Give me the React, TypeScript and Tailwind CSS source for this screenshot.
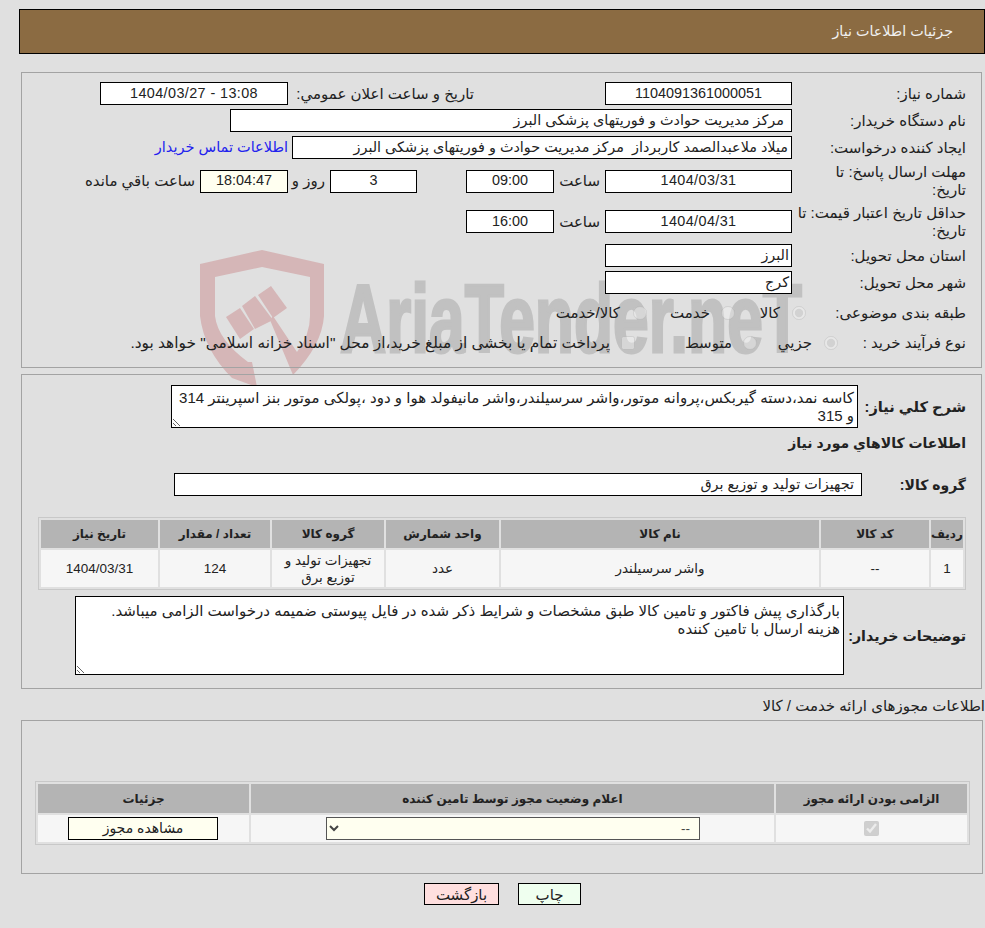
import type { ReactNode } from "react";

function Box({
  className,
  children,
}: {
  className: string;
  children?: ReactNode;
}) {
  return (
    <div
      className={`flex h-[23px] shrink-0 items-center border border-black bg-white text-[14.4px] ${className}`}
    >
      {children}
    </div>
  );
}

function Row({
  className,
  children,
}: {
  className: string;
  children: ReactNode;
}) {
  return <div className={`flex items-center ${className}`}>{children}</div>;
}

function Label({
  className,
  children,
}: {
  className: string;
  children: ReactNode;
}) {
  return <div className={`shrink-0 leading-[18px] ${className}`}>{children}</div>;
}

function Watermark() {
  return (
    <div dir="ltr" className="absolute top-0 left-0 z-0">
      <svg width="985" height="420" viewBox="0 0 985 420">
        <path
          d="M200 264 L262 250 L324 264 L324 316 Q322 345 293 375 L270 320 L273 316 L297 352 Q310 335 310 316 L310 277 L262 267 L215 277 L215 316 Q218 340 248 362 L252 362 L257 387 L232 378 Q204 350 200 316 Z"
          fill="#d5b6b7"
        />
        <path d="M226 317 L240 308 L254 329 L240 339 Z" fill="#d5b6b7" />
        <path d="M242 306 L255 296 L273 320 L255 329 Z" fill="#d5b6b7" />
        <path d="M258 295 L271 286 L287 308 L273 318 Z" fill="#d5b6b7" />
        <text
          x="340"
          y="352"
          fontFamily="Liberation Sans, sans-serif"
          fontWeight="700"
          fontSize="96"
          textLength="462"
          lengthAdjust="spacingAndGlyphs"
          fill="#c1c1c1"
          stroke="#c1c1c1"
          strokeWidth="3"
        >
          AriaTender.neT
        </text>
      </svg>
    </div>
  );
}

function ItemsTable() {
  return (
    <table className="w-[928px] table-fixed border-separate border-spacing-[2px] border border-[#c8c8c8] text-center text-[13.5px]">
      <colgroup>
        <col className="w-[32px]" />
        <col className="w-[108px]" />
        <col className="w-[318px]" />
        <col className="w-[113px]" />
        <col className="w-[112px]" />
        <col className="w-[110px]" />
        <col />
      </colgroup>
      <thead>
        <tr className="h-[28px] bg-[#b4b4b4] text-[12px] font-bold">
          <th>رديف</th>
          <th>کد کالا</th>
          <th>نام کالا</th>
          <th>واحد شمارش</th>
          <th>گروه کالا</th>
          <th>تعداد / مقدار</th>
          <th>تاريخ نياز</th>
        </tr>
      </thead>
      <tbody>
        <tr className="h-[37px] bg-[#f6f6f6] leading-[17px]">
          <td>1</td>
          <td>--</td>
          <td>واشر سرسيلندر</td>
          <td>عدد</td>
          <td>تجهيزات توليد و توزيع برق</td>
          <td>124</td>
          <td>1404/03/31</td>
        </tr>
      </tbody>
    </table>
  );
}

function LicenseTable() {
  return (
    <table className="w-[935px] table-fixed border-separate border-spacing-[2px] border border-[#c8c8c8] text-center text-[13.5px]">
      <colgroup>
        <col className="w-[191px]" />
        <col className="w-[523px]" />
        <col />
      </colgroup>
      <thead>
        <tr className="h-[29px] bg-[#b4b4b4] text-[12px] font-bold">
          <th>الزامی بودن ارائه مجوز</th>
          <th>اعلام وضعيت مجوز توسط تامين کننده</th>
          <th>جزئيات</th>
        </tr>
      </thead>
      <tbody>
        <tr className="h-[27px] bg-[#f6f6f6]">
          <td>
            <input
              type="checkbox"
              checked
              disabled
              readOnly
              className="mx-auto block size-[15px]"
            />
          </td>
          <td>
            <select
              disabled
              className="mr-[74px] block h-[23px] w-[374px] border border-[#555] bg-[#fffff0] pr-[5px] text-[#444] opacity-100"
            >
              <option>--</option>
            </select>
          </td>
          <td>
            <button
              type="button"
              className="mr-[31px] block h-[23px] w-[150px] border border-black bg-[#fffff0] text-[14px] text-[#222]"
            >
              مشاهده مجوز
            </button>
          </td>
        </tr>
      </tbody>
    </table>
  );
}

export default function App() {
  return (
    <div
      dir="rtl"
      className="relative h-[928px] w-[985px] overflow-hidden bg-[#e0e0e0] font-['Liberation_Sans','DejaVu_Sans',sans-serif] text-[15px] text-[#222]"
    >
      <Watermark />
      <div className="relative z-10 pt-[9px]">
        <div className="flex h-[45px] w-[966px] items-center border border-black bg-[#8b6b42] pr-[31px] text-[14.3px] text-[#f0f0f0]">
          جزئيات اطلاعات نياز
        </div>

        <div className="mt-[18px] mr-[3px] h-[296px] w-[961px] border border-[#a3a3a3] pt-[9px] pr-[15px]">
          <Row className="h-[23px]">
            <Label className="w-[174px]">شماره نياز:</Label>
            <Box className="w-[187px] justify-center">1104091361000051</Box>
            <Label className="mr-[131px] w-[181px] whitespace-nowrap">
              تاريخ و ساعت اعلان عمومي:
            </Label>
            <Box className="mr-[5px] w-[188px] justify-center tracking-[0.4px]">
              <span dir="ltr">1404/03/27 - 13:08</span>
            </Box>
          </Row>
          <Row className="mt-[4px] h-[23px]">
            <Label className="w-[174px]">نام دستگاه خريدار:</Label>
            <Box className="w-[562px] pr-[7px]">
              مرکز مديريت حوادث و فوريتهای پزشکی البرز
            </Box>
          </Row>
          <Row className="mt-[4px] h-[23px]">
            <Label className="w-[174px]">ايجاد کننده درخواست:</Label>
            <Box className="w-[500px] pr-[3px]">
              ميلاد ملاعبدالصمد کاربرداز &nbsp;مرکز مديريت حوادث و فوريتهای پزشکی
              البرز
            </Box>
            <a className="mr-[4px] text-[14.5px] text-[#2222ee]" href="#contact">
              اطلاعات تماس خريدار
            </a>
          </Row>
          <Row className="h-[37px] pt-[7px]">
            <Label className="w-[174px] whitespace-nowrap">
              مهلت ارسال پاسخ: تا
              <br />
              تاريخ:
            </Label>
            <Box className="w-[187px] justify-center tracking-[0.4px]">1404/03/31</Box>
            <Label className="w-[51px] pr-[5px]">ساعت</Label>
            <Box className="w-[88px] justify-center">09:00</Box>
            <Box className="mr-[49px] w-[87px] justify-center">3</Box>
            <Label className="w-[42px] pr-[5px]">روز و</Label>
            <Box className="w-[88px] justify-center !bg-[#fffff0]">18:04:47</Box>
            <Label className="pr-[5px]">ساعت باقي مانده</Label>
          </Row>
          <Row className="h-[47px] pt-[4px]">
            <Label className="w-[174px] whitespace-nowrap">
              حداقل تاريخ اعتبار قيمت: تا
              <br />
              تاريخ:
            </Label>
            <Box className="w-[187px] justify-center tracking-[0.4px]">1404/04/31</Box>
            <Label className="w-[51px] pr-[5px]">ساعت</Label>
            <Box className="w-[88px] justify-center">16:00</Box>
          </Row>
          <Row className="mt-[1px] h-[23px]">
            <Label className="w-[174px]">استان محل تحويل:</Label>
            <Box className="w-[187px] pr-[2px]">البرز</Box>
          </Row>
          <Row className="mt-[4px] h-[23px]">
            <Label className="w-[174px]">شهر محل تحويل:</Label>
            <Box className="w-[187px] pr-[2px]">کرج</Box>
          </Row>
          <Row className="mt-[6px] h-[26px]">
            <Label className="w-[160px]">طبقه بندی موضوعی:</Label>
            <input type="radio" checked disabled readOnly className="m-0 size-[14px] opacity-60" />
            <Label className="mr-[12px] w-[45px]">کالا</Label>
            <input type="radio" disabled className="m-0 size-[14px] opacity-60" />
            <Label className="mr-[11px] w-[63px]">خدمت</Label>
            <input type="radio" disabled className="m-0 size-[14px] opacity-60" />
            <Label className="mr-[13px]">کالا/خدمت</Label>
          </Row>
          <Row className="mt-[4px] h-[26px]">
            <Label className="w-[128px]">نوع فرآيند خريد :</Label>
            <input type="radio" checked disabled readOnly className="m-0 size-[14px] opacity-60" />
            <Label className="mr-[12px] w-[55px]">جزيي</Label>
            <input type="radio" disabled className="m-0 size-[14px] opacity-60" />
            <Label className="mr-[11px] w-[97px]">متوسط</Label>
            <input type="checkbox" disabled className="m-0 size-[14px] opacity-60" />
            <Label className="mr-[11px] text-[15.4px]">
              پرداخت تمام يا بخشی از مبلغ خريد،از محل "اسناد خزانه اسلامی" خواهد
              بود.
            </Label>
          </Row>
        </div>

        <div className="mt-[6px] mr-[3px] h-[315px] w-[961px] border border-[#a3a3a3] pt-[10px] pr-[15px]">
          <Row className="h-[43px]">
            <Label className="w-[108px] text-[14.6px] font-bold">شرح کلي نياز:</Label>
            <textarea
              readOnly
              className="h-[43px] w-[687px] overflow-hidden border border-black bg-white px-[3px] pt-[3px] leading-[18px]"
              defaultValue="کاسه نمد،دسته گيربکس،پروانه موتور،واشر سرسيلندر،واشر مانيفولد هوا و دود ،پولکی موتور بنز اسپرينتر 314 و 315"
            />
          </Row>
          <div className="mt-[6px] h-[18px] text-[14px] leading-[18px] font-bold">
            اطلاعات کالاهاي مورد نياز
          </div>
          <Row className="mt-[21px] h-[23px]">
            <Label className="w-[104px] text-[14px] font-bold">گروه کالا:</Label>
            <Box className="w-[688px] pr-[7px]">تجهيزات توليد و توزيع برق</Box>
          </Row>
          <div className="mt-[21px]">
            <ItemsTable />
          </div>
          <Row className="mt-[6px] h-[79px]">
            <Label className="w-[122px] text-[14.2px] font-bold">توضيحات خريدار:</Label>
            <textarea
              readOnly
              className="h-[79px] w-[769px] overflow-hidden border border-black bg-white px-[3px] pt-[5px] leading-[18px]"
              defaultValue={
                "بارگذاری پيش فاکتور و تامين کالا طبق مشخصات و شرايط ذکر شده در فايل پيوستی ضميمه درخواست الزامی ميباشد.\nهزينه ارسال با تامين کننده"
              }
            />
          </Row>
        </div>

        <div className="mt-[8px] h-[18px] leading-[18px]">
          اطلاعات مجوزهای ارائه خدمت / کالا
        </div>

        <div className="mt-[5px] mr-[2px] h-[154px] w-[962px] border border-[#a3a3a3] pt-[60px] pr-[12px]">
          <LicenseTable />
        </div>

        <div className="mt-[9px] mr-[404px] flex gap-[19px]">
          <button
            type="button"
            className="h-[22px] w-[63px] border border-black bg-[#efffef]"
          >
            چاپ
          </button>
          <button
            type="button"
            className="h-[22px] w-[75px] border border-black bg-[#ffdfdf]"
          >
            بازگشت
          </button>
        </div>
      </div>
    </div>
  );
}
